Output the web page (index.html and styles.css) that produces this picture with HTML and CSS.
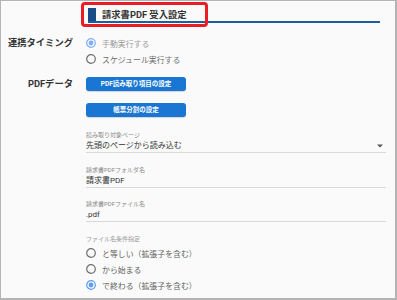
FILE: index.html
```html
<!DOCTYPE html>
<html lang="ja">
<head>
<meta charset="utf-8">
<title>請求書PDF 受入設定</title>
<link rel="stylesheet" href="styles.css">
</head>
<body>
<div class="frame">
  <div class="header">
    <span class="mark"></span>
    <h1 class="title">請求書PDF 受入設定</h1>
  </div>
  <div class="annot"></div>
  <div class="form">
    <div class="label label-top">連携タイミング</div>
    <div class="radios">
      <div class="radio radio-disabled">
        <svg class="rdo" viewBox="0 0 10 10" width="10" height="10"><circle cx="5" cy="5" r="4.3" fill="none" stroke="#7fb0f2" stroke-width="1.2"/><circle cx="5" cy="5" r="2.4" fill="#7fb0f2"/></svg>
        <span>手動実行する</span>
      </div>
      <div class="radio">
        <svg class="rdo" viewBox="0 0 10 10" width="10" height="10"><circle cx="5" cy="5" r="4.3" fill="none" stroke="#6e6e6e" stroke-width="1.2"/></svg>
        <span>スケジュール実行する</span>
      </div>
    </div>
    <div class="label label-btn">PDFデータ</div>
    <div class="content">
      <button class="btn" type="button">PDF読み取り項目の設定</button>
      <button class="btn btn-second" type="button">帳票分割の設定</button>
      <div class="field field-first">
        <div class="field-label">読み取り対象ページ</div>
        <div class="field-value select">
          <span>先頭のページから読み込む</span>
          <svg class="caret" viewBox="0 0 6 4" width="6" height="4"><path d="M0 0.5H6L3 3.5Z" fill="#555"/></svg>
        </div>
      </div>
      <div class="field">
        <div class="field-label">請求書PDFフォルダ名</div>
        <div class="field-value">請求書PDF</div>
      </div>
      <div class="field">
        <div class="field-label">請求書PDFファイル名</div>
        <div class="field-value">.pdf</div>
      </div>
      <div class="cond-label">ファイル名条件指定</div>
      <div class="radios cond-radios">
        <div class="radio radio-dark">
          <svg class="rdo" viewBox="0 0 10 10" width="10" height="10"><circle cx="5" cy="5" r="4.3" fill="none" stroke="#6e6e6e" stroke-width="1.2"/></svg>
          <span>と等しい（拡張子を含む）</span>
        </div>
        <div class="radio radio-dark">
          <svg class="rdo" viewBox="0 0 10 10" width="10" height="10"><circle cx="5" cy="5" r="4.3" fill="none" stroke="#6e6e6e" stroke-width="1.2"/></svg>
          <span>から始まる</span>
        </div>
        <div class="radio radio-dark">
          <svg class="rdo" viewBox="0 0 10 10" width="10" height="10"><circle cx="5" cy="5" r="4.3" fill="none" stroke="#5d9df3" stroke-width="1.2"/><circle cx="5" cy="5" r="2.4" fill="#5d9df3"/></svg>
          <span>で終わる（拡張子を含む）</span>
        </div>
      </div>
    </div>
  </div>
</div>
</body>
</html>
```
FILE: styles.css
```css
* { box-sizing: border-box; }
html, body { margin: 0; padding: 0; }
body {
  font-family: Roboto, "Noto Sans CJK JP", sans-serif;
  color: #333;
  background: #fafafa;
}
.frame {
  position: relative;
  width: 397px;
  height: 300px;
  background: #fafafa;
  border: 1px solid #b4b4b4;
  border-right-width: 2px;
  border-bottom-width: 2px;
  overflow: hidden;
}
.header {
  display: flex;
  align-items: center;
  gap: 6px;
  margin: 7px 0 0 87px;
  width: 292px;
  height: 15px;
  border-bottom: 2px solid #1d5f9e;
}
.mark {
  display: block;
  width: 8px;
  height: 13px;
  background: #1a4c86;
  align-self: flex-end;
}
.title {
  margin: 0;
  font-size: 9.3px;
  font-weight: 700;
  line-height: 13px;
  color: #333;
}
.annot {
  position: absolute;
  left: 80px;
  top: 1px;
  width: 127px;
  height: 25px;
  border: 3px solid #ea1c24;
  border-radius: 4px;
}
.form {
  display: grid;
  grid-template-columns: 72px 300px;
  column-gap: 13px;
  row-gap: 10px;
  margin-top: 12px;
}
.label {
  text-align: right;
  font-size: 9.3px;
  font-weight: 700;
  color: #333;
  white-space: nowrap;
}
.label-top { line-height: 16px; }
.label-btn { line-height: 13px; }
.radios {
  display: flex;
  flex-direction: column;
}
.radio {
  display: flex;
  align-items: center;
  gap: 6px;
  height: 16px;
  font-size: 7.9px;
  color: #707070;
  white-space: nowrap;
}
.radio-disabled { color: #9c9c9c; }
.radio-dark { color: #5f5f5f; }
.rdo { display: block; flex: none; }
.content {
  display: flex;
  flex-direction: column;
}
.btn {
  display: block;
  width: 100px;
  height: 14px;
  padding: 0;
  border: 0;
  border-radius: 3px;
  background: #1976d2;
  color: #fff;
  font-family: Roboto, "Noto Sans CJK JP", sans-serif;
  font-size: 6.5px;
  font-weight: 700;
  line-height: 14px;
  text-align: center;
  box-shadow: 0 1px 1px rgba(0,0,0,0.15);
}
.btn-second { margin-top: 11.5px; }
.field { margin-top: 12.5px; }
.field-first { margin-top: 14.5px; }
.field-label {
  font-size: 6px;
  line-height: 8px;
  color: #8a8a8a;
  white-space: nowrap;
}
.field-value {
  display: flex;
  align-items: center;
  justify-content: space-between;
  height: 13px;
  font-size: 8px;
  line-height: 13px;
  color: #333;
  border-bottom: 1.5px solid #d8d8d8;
  box-sizing: content-box;
}
.caret { display: block; margin-right: 3px; }
.cond-label {
  margin-top: 13px;
  font-size: 6px;
  line-height: 8px;
  color: #999;
}
.cond-radios { margin-top: 2.3px; }
```
